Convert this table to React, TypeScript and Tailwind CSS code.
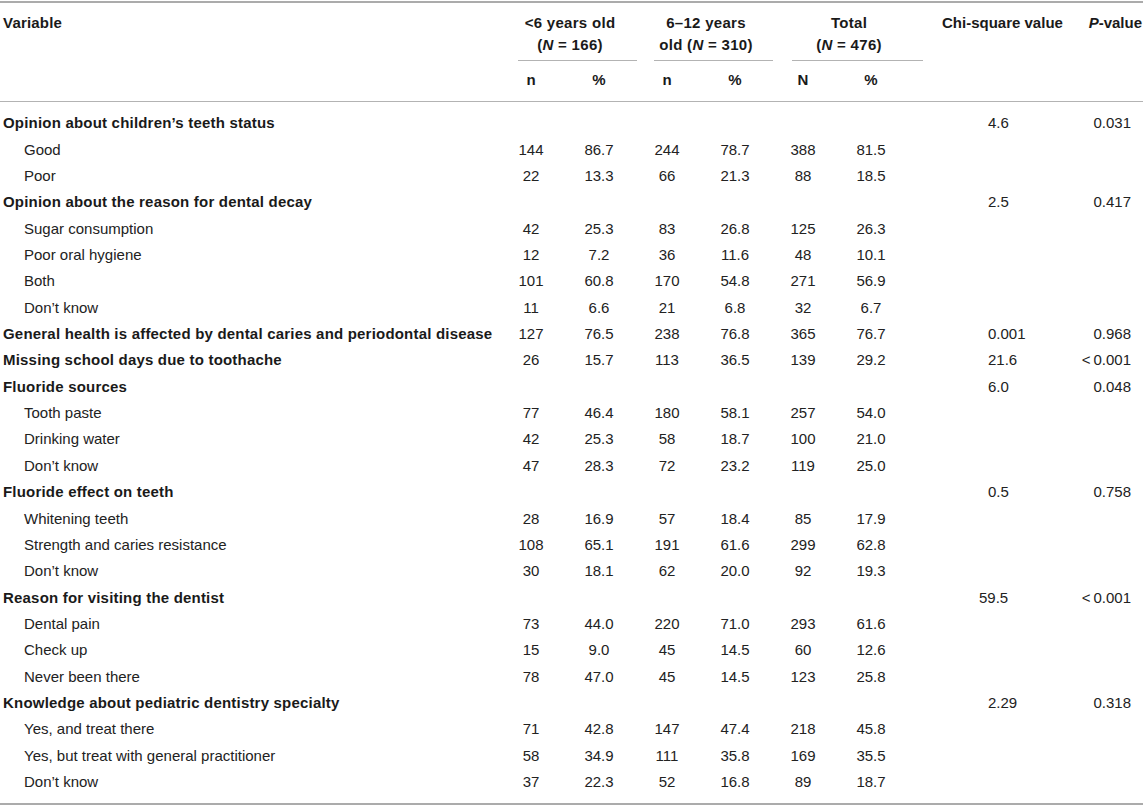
type Row = {
  label: string
  head?: boolean
  v?: string[]
  chi?: string
  p?: string
  chiClass?: string
}

const rows: Row[] = [
  { label: 'Opinion about children\u2019s teeth status', head: true, chi: '4.6', p: '0.031' },
  { label: 'Good', v: ['144', '86.7', '244', '78.7', '388', '81.5'] },
  { label: 'Poor', v: ['22', '13.3', '66', '21.3', '88', '18.5'] },
  { label: 'Opinion about the reason for dental decay', head: true, chi: '2.5', p: '0.417' },
  { label: 'Sugar consumption', v: ['42', '25.3', '83', '26.8', '125', '26.3'] },
  { label: 'Poor oral hygiene', v: ['12', '7.2', '36', '11.6', '48', '10.1'] },
  { label: 'Both', v: ['101', '60.8', '170', '54.8', '271', '56.9'] },
  { label: 'Don\u2019t know', v: ['11', '6.6', '21', '6.8', '32', '6.7'] },
  {
    label: 'General health is affected by dental caries and periodontal disease',
    head: true,
    v: ['127', '76.5', '238', '76.8', '365', '76.7'],
    chi: '0.001',
    p: '0.968',
  },
  {
    label: 'Missing school days due to toothache',
    head: true,
    v: ['26', '15.7', '113', '36.5', '139', '29.2'],
    chi: '21.6',
    p: '<\u20090.001',
  },
  { label: 'Fluoride sources', head: true, chi: '6.0', p: '0.048' },
  { label: 'Tooth paste', v: ['77', '46.4', '180', '58.1', '257', '54.0'] },
  { label: 'Drinking water', v: ['42', '25.3', '58', '18.7', '100', '21.0'] },
  { label: 'Don\u2019t know', v: ['47', '28.3', '72', '23.2', '119', '25.0'] },
  { label: 'Fluoride effect on teeth', head: true, chi: '0.5', p: '0.758' },
  { label: 'Whitening teeth', v: ['28', '16.9', '57', '18.4', '85', '17.9'] },
  { label: 'Strength and caries resistance', v: ['108', '65.1', '191', '61.6', '299', '62.8'] },
  { label: 'Don\u2019t know', v: ['30', '18.1', '62', '20.0', '92', '19.3'] },
  { label: 'Reason for visiting the dentist', head: true, chi: '59.5', p: '<\u20090.001', chiClass: 'pl-[74px]' },
  { label: 'Dental pain', v: ['73', '44.0', '220', '71.0', '293', '61.6'] },
  { label: 'Check up', v: ['15', '9.0', '45', '14.5', '60', '12.6'] },
  { label: 'Never been there', v: ['78', '47.0', '45', '14.5', '123', '25.8'] },
  { label: 'Knowledge about pediatric dentistry specialty', head: true, chi: '2.29', p: '0.318' },
  { label: 'Yes, and treat there', v: ['71', '42.8', '147', '47.4', '218', '45.8'] },
  { label: 'Yes, but treat with general practitioner', v: ['58', '34.9', '111', '35.8', '169', '35.5'] },
  { label: 'Don\u2019t know', v: ['37', '22.3', '52', '16.8', '89', '18.7'] },
]

function GroupHead({ children, pad, line }: { children: React.ReactNode; pad: string; line: string }) {
  return (
    <th colSpan={2} className="p-0 align-top font-bold tracking-[0.3px]">
      <div className={`pt-[9px] leading-[22px] text-center whitespace-nowrap ${pad}`}>{children}</div>
      <div className={`mt-[4px] border-b border-[#b3b3b3] ${line}`} />
    </th>
  )
}

export default function App() {
  return (
    <div className="w-[1143px] bg-white pt-[1px] text-[15px] text-[#222] font-['Liberation_Sans',Arial,sans-serif]">
      <table className="w-[1143px] table-fixed border-collapse">
        <colgroup>
          <col className="w-[497px]" />
          <col className="w-[68px]" />
          <col className="w-[68px]" />
          <col className="w-[68px]" />
          <col className="w-[68px]" />
          <col className="w-[68px]" />
          <col className="w-[68px]" />
          <col className="w-[155px]" />
          <col className="w-[83px]" />
        </colgroup>
        <thead className="text-[#1a1a1a]">
          <tr className="border-t-2 border-[#ababab]">
            <th rowSpan={2} className="p-0 pl-[3px] pt-[9px] align-top text-left font-bold leading-[22px] tracking-[0.2px]">
              Variable
            </th>
            <GroupHead pad="pl-[10px]" line="ml-[21px] mr-[-4px]">
              &lt;6 years old
              <br />(<i>N</i> = 166)
            </GroupHead>
            <GroupHead pad="pl-[10px]" line="ml-[21px] mr-[-4px]">
              6–12 years
              <br />
              old (<i>N</i> = 310)
            </GroupHead>
            <GroupHead pad="pl-[24px]" line="ml-[23px] mr-[-18px]">
              Total
              <br />(<i>N</i> = 476)
            </GroupHead>
            <th rowSpan={2} className="p-0 pl-[37px] pt-[9px] align-top text-left font-bold leading-[22px] whitespace-nowrap">
              Chi-square value
            </th>
            <th rowSpan={2} className="p-0 pr-[1px] pt-[9px] align-top text-right font-bold leading-[22px]">
              <i>P</i>-value
            </th>
          </tr>
          <tr className="h-[40px] border-b border-[#b3b3b3]">
            {['n', '%', 'n', '%', 'N', '%'].map((h, i) => (
              <th key={i} className="p-0 pb-[1px] text-center font-bold">
                {h}
              </th>
            ))}
          </tr>
        </thead>
        <tbody>
          <tr className="h-[9px]">
            <td colSpan={9} className="p-0" />
          </tr>
          {rows.map((r, i) => (
            <tr key={i} className="h-[26.36px] leading-[26px]">
              <td
                className={`p-0 whitespace-nowrap ${
                  r.head ? 'pl-[3px] font-bold tracking-[0.2px] text-[#1a1a1a]' : 'pl-[24px]'
                }`}
              >
                {r.label}
              </td>
              {Array.from({ length: 6 }).map((_, j) => (
                <td key={j} className="p-0 text-center">
                  {r.v ? r.v[j] : ''}
                </td>
              ))}
              <td className={`p-0 text-left ${r.chiClass ?? 'pl-[83px]'}`}>{r.chi ?? ''}</td>
              <td className="p-0 pr-[12px] text-right whitespace-nowrap">{r.p ?? ''}</td>
            </tr>
          ))}
          <tr className="h-[9px] border-b-2 border-[#ababab]">
            <td colSpan={9} className="p-0" />
          </tr>
        </tbody>
      </table>
    </div>
  )
}
